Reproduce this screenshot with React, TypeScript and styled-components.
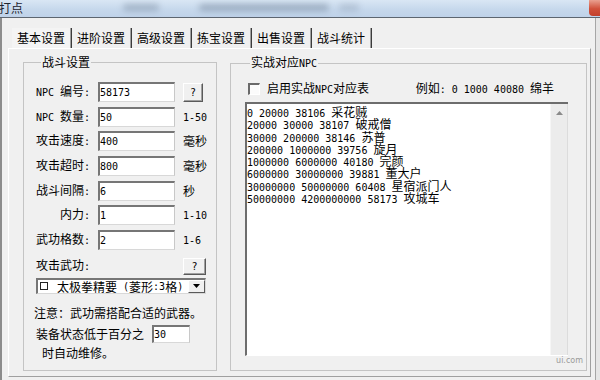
import React from 'react';
import styled, { createGlobalStyle } from 'styled-components';

const CJK = `"Noto Sans CJK SC", "Noto Sans CJK JP", sans-serif`;
const MONO = `"DejaVu Sans Mono", "Liberation Mono", monospace`;

const GlobalStyle = createGlobalStyle`
  html, body { margin: 0; padding: 0; background: #e6e6e6; }
  body { width: 600px; height: 380px; overflow: hidden; }
  * { box-sizing: border-box; }
`;

const Half = styled.span`
  font-family: ${MONO};
  font-size: 10px;
  white-space: pre;
`;

function Txt({ children }: { children: string }) {
  const parts = children.split(/([\x20-\x7e]+)/);
  return (
    <>
      {parts.map((p, i) =>
        p === '' ? null : /^[\x20-\x7e]+$/.test(p) ? (
          <Half key={i}>{p}</Half>
        ) : (
          <React.Fragment key={i}>{p}</React.Fragment>
        )
      )}
    </>
  );
}

const Window = styled.div`
  width: 600px;
  height: 380px;
  display: flex;
  flex-direction: column;
  background: #e6e6e6;
  font-family: ${CJK};
  font-size: 12px;
  line-height: 14px;
  color: #000;
  position: relative;
  overflow: hidden;
`;

const TitleBar = styled.div`
  height: 18px;
  flex: none;
  display: flex;
  align-items: flex-start;
  background: linear-gradient(180deg, #d9e6f4 0%, #c6d8ec 55%, #bfd2e9 100%);
  border-bottom: 1px solid #5d6670;
`;

const TitleText = styled.span`
  margin-left: -1px;
  margin-top: 1px;
  font-size: 12px;
  line-height: 14px;
  color: #1e2530;
`;

const Smudge = styled.span<{ $w: number; $ml: number; $o: number }>`
  width: ${(p) => p.$w}px;
  height: 7px;
  margin-left: ${(p) => p.$ml}px;
  margin-top: 4px;
  border-radius: 4px;
  background: rgba(70, 85, 110, ${(p) => p.$o});
  filter: blur(3px);
`;

const CloseBtn = styled.span`
  margin-left: auto;
  width: 11px;
  height: 16px;
  border-radius: 0 0 0 4px;
  background: linear-gradient(180deg, #e9a090 0%, #d0503a 55%, #c2402c 100%);
`;

const Frame = styled.div`
  flex: 1;
  display: flex;
  flex-direction: column;
  width: 596px;
  background: #f0f0f0;
  border-left: 2px solid #8c8c8c;
  border-right: 1px solid #a6a6a6;
  padding: 10px 4px 3px 6px;
`;

const TabStrip = styled.div`
  display: flex;
  height: 20px;
  padding-left: 4px;
  flex: none;
`;

const Tab = styled.div<{ $active?: boolean }>`
  padding: 0 6px 0 5px;
  line-height: 20px;
  height: 20px;
  border-right: 1px solid #3c3c3c;
  box-shadow: inset -1px 0 0 #a0a0a0;
  background: ${(p) => (p.$active ? '#f4f4f4' : 'transparent')};
  white-space: nowrap;
`;

const Panel = styled.div`
  flex: 1;
  display: flex;
  gap: 13px;
  border: 1px solid;
  border-color: #ffffff #a0a0a0 #a0a0a0 #ffffff;
  padding: 6px 3px 5px 14px;
`;

const GroupBox = styled.fieldset<{ $w?: number; $pad: string }>`
  margin: 0;
  min-width: 0;
  ${(p) => (p.$w ? `width: ${p.$w}px; flex: none;` : 'flex: 1;')}
  padding: ${(p) => p.$pad};
  border: 1px solid #c4c4c4;
  display: flex;
  flex-direction: column;
`;

const Legend = styled.legend`
  margin-left: 5px;
  padding: 0 1px;
  line-height: 14px;
  font-size: 12px;
`;

const FieldRow = styled.div<{ $mt: number }>`
  display: flex;
  align-items: center;
  height: 20px;
  margin-top: ${(p) => p.$mt}px;
`;

const Label = styled.span`
  width: 54px;
  flex: none;
  text-align: right;
  white-space: nowrap;
`;

const TextInput = styled.input<{ $w: number; $h: number }>`
  width: ${(p) => p.$w}px;
  height: ${(p) => p.$h}px;
  flex: none;
  margin: 0 0 0 8px;
  padding: 0;
  border-style: solid;
  border-width: 2px 1px 1px 2px;
  border-color: #767676 #c8c8c8 #d8d8d8 #767676;
  background: #fff;
  font-family: ${MONO};
  font-size: 10px;
  color: #000;
  outline: none;
`;

const Suffix = styled.span`
  margin-left: 8px;
  white-space: nowrap;
`;

const RaisedButton = styled.button<{ $w: number; $h: number; $ml: number }>`
  width: ${(p) => p.$w}px;
  height: ${(p) => p.$h}px;
  margin: 0 0 0 ${(p) => p.$ml}px;
  padding: 0;
  flex: none;
  display: flex;
  align-items: center;
  justify-content: center;
  background: #f0f0f0;
  border: 1px solid;
  border-color: #ffffff #5a5a5a #5a5a5a #ffffff;
  box-shadow: inset -1px -1px 0 #a0a0a0;
  font-family: ${MONO};
  font-size: 10px;
  color: #000;
`;

const WeaponRow = styled.div`
  display: flex;
  align-items: center;
  justify-content: space-between;
  height: 17px;
  width: 170px;
  margin-top: 7.8px;
`;

const Combo = styled.div`
  width: 170px;
  height: 16px;
  margin-top: 3px;
  display: flex;
  align-items: stretch;
  border-style: solid;
  border-width: 2px 1px 1px 2px;
  border-color: #767676 #d8d8d8 #d8d8d8 #767676;
  background: #fff;
`;

const ComboText = styled.div`
  flex: 1;
  display: flex;
  align-items: center;
  padding-left: 2px;
  line-height: 13px;
  white-space: nowrap;
`;

const Square = styled.span`
  width: 8px;
  height: 8px;
  border: 1px solid #222;
  margin-right: 9px;
  flex: none;
`;

const ComboButton = styled.span`
  width: 17px;
  flex: none;
  display: flex;
  align-items: center;
  justify-content: center;
  background: #f0f0f0;
  border: 1px solid;
  border-color: #ffffff #5a5a5a #5a5a5a #ffffff;
`;

const Note = styled.div`
  margin-top: 12px;
  margin-left: -2px;
  white-space: nowrap;
`;

const RepairRow = styled.div`
  display: flex;
  align-items: center;
  height: 18px;
  margin-top: 5px;
  white-space: nowrap;
`;

const RepairTail = styled.div`
  margin-top: 3px;
  padding-left: 6px;
`;

const CheckRow = styled.div`
  display: flex;
  align-items: center;
  height: 12px;
  white-space: nowrap;
`;

const CheckBox = styled.span`
  width: 12px;
  height: 12px;
  margin-left: 3px;
  flex: none;
  border-style: solid;
  border-width: 2px 1px 1px 2px;
  border-color: #6a6a6a #ffffff #ffffff #6a6a6a;
  background: #fbfbfb;
`;

const CheckLabel = styled.span`
  margin-left: 7px;
`;

const Example = styled.span`
  margin-left: auto;
  margin-right: 14px;
`;

const ListBox = styled.div`
  flex: 1;
  margin-top: 7px;
  display: flex;
  border-style: solid;
  border-width: 2px 0 1px 2px;
  border-color: #6d6d6d #ffffff #ffffff #6d6d6d;
`;

const ListContent = styled.div`
  flex: 1;
  background: #fff;
  padding-top: 2px;
  line-height: 12.3px;
`;

const ListLine = styled.div`
  height: 12.3px;
  white-space: pre;
`;

const ScrollBar = styled.div`
  width: 18px;
  flex: none;
  background: #ececec;
  border-left: 1px solid #f6f6f6;
  border-right: 1px solid #dcdcdc;
  display: flex;
  flex-direction: column;
`;

const ScrollArrow = styled.div`
  height: 17px;
  display: flex;
  align-items: center;
  justify-content: center;
`;

const Watermark = styled.span`
  position: absolute;
  right: 17px;
  bottom: 15px;
  font-family: "DejaVu Sans", sans-serif;
  font-size: 8px;
  line-height: 9px;
  color: #9a9a9a;
`;

const fields: { label: string; value: string; suffix?: string; help?: boolean }[] = [
  { label: 'NPC 编号:', value: '58173', help: true },
  { label: 'NPC 数量:', value: '50', suffix: '1-50' },
  { label: '攻击速度:', value: '400', suffix: '毫秒' },
  { label: '攻击超时:', value: '800', suffix: '毫秒' },
  { label: '战斗间隔:', value: '6', suffix: '秒' },
  { label: '内力:', value: '1', suffix: '1-10' },
  { label: '武功格数:', value: '2', suffix: '1-6' },
];

const npcLines = [
  '0 20000 38106 采花贼',
  '20000 30000 38107 破戒僧',
  '30000 200000 38146 苏普',
  '200000 1000000 39756 旋月',
  '1000000 6000000 40180 完颜',
  '6000000 30000000 39881 董大户',
  '30000000 50000000 60408 星宿派门人',
  '50000000 4200000000 58173 攻城车',
];

const tabs = ['基本设置', '进阶设置', '高级设置', '拣宝设置', '出售设置', '战斗统计'];

export default function App() {
  return (
    <Window>
      <GlobalStyle />
      <TitleBar>
        <TitleText>打点</TitleText>
        <Smudge $w={36} $ml={100} $o={0.3} />
        <Smudge $w={130} $ml={40} $o={0.35} />
        <Smudge $w={20} $ml={10} $o={0.2} />
        <CloseBtn />
      </TitleBar>
      <Frame>
        <TabStrip>
          {tabs.map((t, i) => (
            <Tab key={t} $active={i === 0}>
              {t}
            </Tab>
          ))}
        </TabStrip>
        <Panel>
          <GroupBox $w={194} $pad="13px 10px 0 12px">
            <Legend>战斗设置</Legend>
            {fields.map((f, i) => (
              <FieldRow key={f.label} $mt={i === 0 ? 0 : 4.7}>
                <Label>
                  <Txt>{f.label}</Txt>
                </Label>
                <TextInput $w={77} $h={20} readOnly value={f.value} />
                {f.help ? (
                  <RaisedButton $w={20} $h={19} $ml={8}>
                    ?
                  </RaisedButton>
                ) : (
                  <Suffix>
                    <Txt>{f.suffix ?? ''}</Txt>
                  </Suffix>
                )}
              </FieldRow>
            ))}
            <WeaponRow>
              <span>
                <Txt>攻击武功:</Txt>
              </span>
              <RaisedButton $w={23} $h={17} $ml={0}>
                ?
              </RaisedButton>
            </WeaponRow>
            <Combo>
              <ComboText>
                <Square />
                <Txt>太极拳精要 (菱形:3格)</Txt>
              </ComboText>
              <ComboButton>
                <svg width="7" height="4" viewBox="0 0 7 4">
                  <polygon points="0,0 7,0 3.5,4" fill="#000" />
                </svg>
              </ComboButton>
            </Combo>
            <Note>注意：武功需搭配合适的武器。</Note>
            <RepairRow>
              装备状态低于百分之
              <TextInput $w={38} $h={18} readOnly value="30" />
            </RepairRow>
            <RepairTail>时自动维修。</RepairTail>
          </GroupBox>
          <GroupBox $pad="12px 18px 14px 14px">
            <Legend>
              <Txt>实战对应NPC</Txt>
            </Legend>
            <CheckRow>
              <CheckBox />
              <CheckLabel>
                <Txt>启用实战NPC对应表</Txt>
              </CheckLabel>
              <Example>
                <Txt>例如: 0 1000 40080 绵羊</Txt>
              </Example>
            </CheckRow>
            <ListBox>
              <ListContent>
                {npcLines.map((l) => (
                  <ListLine key={l}>
                    <Txt>{l}</Txt>
                  </ListLine>
                ))}
              </ListContent>
              <ScrollBar>
                <ScrollArrow>
                  <svg width="7" height="4" viewBox="0 0 7 4">
                    <polygon points="0,4 7,4 3.5,0" fill="#8a8a8a" />
                  </svg>
                </ScrollArrow>
              </ScrollBar>
            </ListBox>
          </GroupBox>
        </Panel>
      </Frame>
      <Watermark>ui.com</Watermark>
    </Window>
  );
}
